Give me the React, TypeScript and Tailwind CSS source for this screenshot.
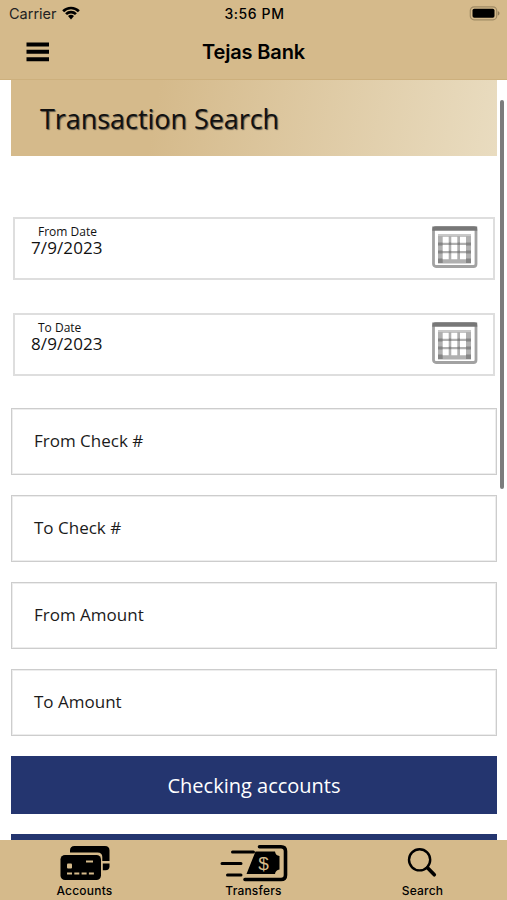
import React from "react";

function WifiIcon() {
  return (
    <svg width="18" height="14" viewBox="0 0 18 14" className="-mt-[2px] block">
      <path d="M.2 4.300a12.400 12.400 0 0 1 17.600 0L15.900 6.200a9.800 9.800 0 0 0-13.800 0z" />
      <path d="M3.100 7.200a8.300 8.300 0 0 1 11.800 0L13 9.100a5.700 5.700 0 0 0-8 0z" />
      <path d="M6 10.100a4.300 4.300 0 0 1 6 0l-3 3.300z" />
    </svg>
  );
}

function BatteryIcon() {
  return (
    <svg width="31" height="15" viewBox="0 0 31 15" className="block">
      <rect x="1.3" y="0.8" width="26.400" height="13" rx="3.800" fill="none" stroke="#a08b65" strokeWidth="1.200" />
      <rect x="3.500" y="2.800" width="22" height="9" rx="1.800" />
      <path d="M28.800 5v4.600c1.100-.4 1.700-1.300 1.700-2.300s-.6-1.900-1.700-2.300z" fill="#8e7b59" />
    </svg>
  );
}

function MenuIcon() {
  return (
    <svg width="23" height="20" viewBox="0 0 23 20" className="-mt-px block">
      <path d="M.5 .5h22.500v4H.5zM.5 7.800h22.500v4H.5zM.5 15.200h22.500v4H.5z" />
    </svg>
  );
}

function CalendarIcon() {
  return (
    <svg width="46" height="43" viewBox="0 0 46 43" className="block">
      <rect x="1.500" y="1.500" width="42.500" height="39" rx="2.500" fill="#fff" stroke="#a2a2a2" strokeWidth="2.800" />
      <path d="M.3 .5h44.900v4.300H.3z" fill="#777" />
      <path d="M6 8h33v29.500H6z" fill="#b0b0b0" />
      <path d="M6 8h33v2H6z" fill="#c8c8c8" />
      <g fill="#858585">
        <path d="M6 16.500h4.700v3H6zM6 24.500h4.700v3H6zM6 32.500h4.700v4.500H6zM34 16.500h5v3h-5zM34 24.500h5v3h-5zM34 32.500h5v4.500h-5z" />
        <path d="M16.700 16.500h2.600v2.500h-2.600zM25.300 16.500H28V19h-2.700zM16.700 24.700h2.600v2.600h-2.600zM25.300 24.700H28v2.600h-2.700z" />
      </g>
      <g fill="#fff">
        <path d="M10.700 10.700h6v6h-6zM19.300 10.700h6v6h-6zM28 10.700h6v6h-6z" />
        <path d="M10.700 18.900h6v6h-6zM19.300 18.900h6v6h-6zM28 18.900h6v6h-6z" />
        <path d="M10.700 27.300h6v6h-6zM19.300 27.300h6v6h-6zM28 27.300h6v6h-6z" />
      </g>
    </svg>
  );
}

function CardsIcon() {
  return (
    <svg width="50" height="36" viewBox="0 0 50 36" className="block">
      <path d="M10 7.500V5.500Q10 1 14.500 1H45q4.500 0 4.500 4.500V16h-7.200v-4Q42.300 7.500 37.500 7.500z" />
      <path d="M42.800 18.500h6.700v2.700q0 4-4 4h-2.700z" />
      <rect x="0.500" y="10" width="40.500" height="25" rx="4.500" />
      <rect x="7" y="18.500" width="5" height="5" rx="1" fill="#d5ba8b" />
      <path d="M26 16.500h7" stroke="#d5ba8b" strokeWidth="2" />
      <path d="M7 28.500h27" stroke="#d5ba8b" strokeWidth="1.800" strokeDasharray="5 2.300" />
    </svg>
  );
}

function TransferIcon() {
  return (
    <svg width="68" height="38" viewBox="0 0 68 38" className="block">
      <path d="M12.500 8h21M2 19.500h19M7.500 31H21" stroke="#000" strokeWidth="3" strokeLinecap="round" />
      <path d="M39.500 2.800H61q4.500 0 4.500 4.500V31q0 4.500-4.500 4.500H25" fill="none" stroke="#000" strokeWidth="3.600" strokeLinecap="round" />
      <path d="M35.500 7.500H55q.5 4 4.500 4.500v13.500q-4 .5-4.500 4.500H26.500z" />
      <text x="43.500" y="25.500" textAnchor="middle" fill="#d5ba8b" className="font-['Liberation_Sans'] text-[19px]">$</text>
    </svg>
  );
}

function SearchIcon() {
  return (
    <svg width="32" height="32" viewBox="0 0 32 32" className="block">
      <circle cx="12.600" cy="12.800" r="10.600" fill="none" stroke="#000" strokeWidth="2.400" />
      <path d="m20.500 20.800 6.800 7" stroke="#000" strokeWidth="3.600" strokeLinecap="round" />
    </svg>
  );
}

function DateField({ label, value }: { label: string; value: string }) {
  return (
    <div className="mx-[13px] flex h-[63px] shrink-0 items-start justify-between border-2 border-[#dedede] pr-[15px] pl-[16px]">
      <div className="pt-[5px] text-[#111]">
        <div className="pl-[7px] text-[12px] leading-[16px]">{label}</div>
        <div className="text-[17px] leading-[16px] font-medium tracking-[0.100px]">{value}</div>
      </div>
      <div className="pt-[7px]">
        <CalendarIcon />
      </div>
    </div>
  );
}

function TextField({ label }: { label: string }) {
  return (
    <div className="mx-[11px] flex h-[67px] shrink-0 items-center border border-[#cdcdcd] pb-[2px] pl-[22px] text-[17px] text-[#1b1b1b] outline outline-[#ededed] -outline-offset-2">
      {label}
    </div>
  );
}

function Tab({ label, children }: { label: string; children: React.ReactNode }) {
  return (
    <div className="flex flex-1 flex-col items-center">
      <div className="flex h-[42px] items-center">{children}</div>
      <div className="font-[Inter] text-[12px] leading-[13px] font-medium tracking-[0.200px]">{label}</div>
    </div>
  );
}

export default function App() {
  return (
    <div className="relative flex h-[900px] w-[507px] flex-col overflow-hidden bg-white font-['Open_Sans',sans-serif] text-black">
      <header className="h-[80px] shrink-0 border-b border-[#cdb07d] bg-[#d5ba8b] font-['Inter',sans-serif]">
        <div className="grid h-[27px] grid-cols-3 items-center pr-[7px] pl-[9px]">
          <div className="flex items-center gap-[5px] text-[14.500px] text-[#222]">
            Carrier <WifiIcon />
          </div>
          <div className="text-center text-[14px] font-medium tracking-[0.600px]">3:56 PM</div>
          <div className="flex justify-end"><BatteryIcon /></div>
        </div>
        <div className="grid h-[50px] grid-cols-3 items-center px-[26px]">
          <MenuIcon />
          <div className="text-center text-[20px] font-semibold tracking-[-0.150px] whitespace-nowrap">Tejas Bank</div>
        </div>
      </header>

      <main className="flex min-h-0 flex-1 flex-col overflow-hidden pr-[10px] pl-[11px]">
        <div className="flex h-[76px] shrink-0 items-center bg-linear-[100deg] from-[#d5ba8b] from-30% to-[#e9dcc0] pt-[2px] pl-[29px]">
          <h1 className="text-[27px] leading-[36px] font-medium tracking-[-0.050px] text-[#111] [text-shadow:1px_1px_1px_#222a]">Transaction Search</h1>
        </div>
        <div className="-mx-[11px] mt-[61px] mb-[32px] flex shrink-0 flex-col gap-[33px]">
          <DateField label="From Date" value="7/9/2023" />
          <DateField label="To Date" value="8/9/2023" />
        </div>
        <div className="-mx-[11px] flex shrink-0 flex-col gap-[20px]">
          <TextField label="From Check #" />
          <TextField label="To Check #" />
          <TextField label="From Amount" />
          <TextField label="To Amount" />
          <button className="mx-[11px] h-[58px] bg-[#24356f] pt-px text-[20px] text-white">Checking accounts</button>
          <div className="mx-[11px] h-[58px] bg-[#24356f]" />
        </div>
      </main>

      <nav className="flex h-[60px] shrink-0 bg-[#d5ba8b] pt-[2px]">
        <Tab label="Accounts"><CardsIcon /></Tab>
        <Tab label="Transfers"><TransferIcon /></Tab>
        <Tab label="Search"><SearchIcon /></Tab>
      </nav>

      <div className="absolute top-[100px] right-[3px] h-[389px] w-[4px] rounded-full bg-[#7c7c7c]" />
    </div>
  );
}
